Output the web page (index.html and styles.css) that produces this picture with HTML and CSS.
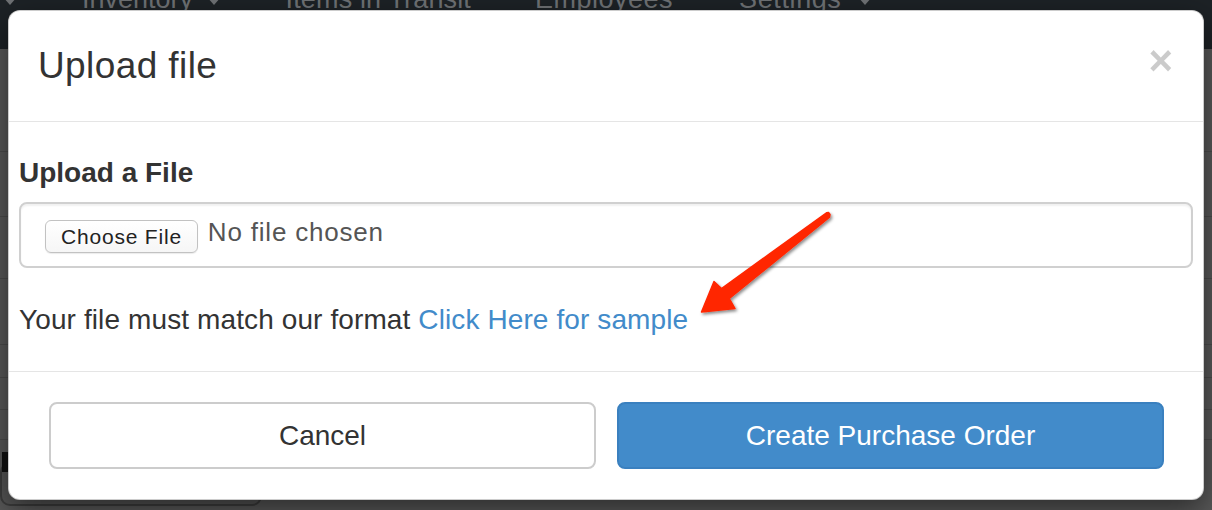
FILE: index.html
```html
<!DOCTYPE html>
<html lang="en">
<head>
<meta charset="utf-8">
<title>Upload file</title>
<link rel="stylesheet" href="styles.css">
</head>
<body>
<div class="page">
  <nav class="navbar">
    <ul class="nav">
      <li class="nav-item nav-caret-only"><span class="caret"></span></li>
      <li class="nav-item">Inventory <span class="caret"></span></li>
      <li class="nav-item">Items in Transit</li>
      <li class="nav-item">Employees</li>
      <li class="nav-item">Settings <span class="caret"></span></li>
    </ul>
  </nav>
  <div class="rows">
    <div class="row r1"></div>
    <div class="row r2"></div>
    <div class="row r3"></div>
    <div class="row r4"></div>
    <div class="row r5"></div>
    <div class="row r6"></div>
    <div class="row r7"></div>
    <div class="bottom-box"><span class="bottom-mark"></span></div>
  </div>
</div>

<div class="modal">
  <div class="modal-header">
    <h4 class="modal-title">Upload file</h4>
    <button class="close" type="button">×</button>
  </div>
  <div class="modal-body">
    <label class="field-label">Upload a File</label>
    <div class="file-control">
      <span class="file-btn">Choose File</span>
      <span class="file-name">No file chosen</span>
    </div>
    <p class="help">Your file must match our format <a class="link" href="#">Click Here for sample</a></p>
  </div>
  <div class="modal-footer">
    <button class="btn btn-default" type="button">Cancel</button>
    <button class="btn btn-primary" type="button">Create Purchase Order</button>
  </div>
</div>

<svg class="annotation" viewBox="0 0 1212 510" width="1212" height="510" aria-hidden="true">
  <defs>
    <filter id="shadow" x="-20%" y="-20%" width="140%" height="140%">
      <feDropShadow dx="1.5" dy="2" stdDeviation="1.5" flood-color="#000" flood-opacity="0.45"/>
    </filter>
  </defs>
  <polygon filter="url(#shadow)" fill="#ff2600" stroke="#ff2600" stroke-width="1.5" stroke-linejoin="round"
    points="826.5,212.8 721.5,288.5 714,281.5 701.5,312 735,308.5 729.3,298.5 829.5,217.2 830,214.5 828.5,212.5"/>
</svg>
</body>
</html>
```

FILE: styles.css
```css
* { box-sizing: border-box; }

html, body {
  margin: 0;
  padding: 0;
}

body {
  width: 1212px;
  height: 510px;
  overflow: hidden;
  background: #585858;
  font-family: "Liberation Sans", Arial, Helvetica, sans-serif;
  color: #333;
  position: relative;
}

/* ---------- background page ---------- */
.page {
  width: 100%;
  height: 100%;
}

.navbar {
  height: 49px;
  background: #1d2226;
  overflow: hidden;
}

.nav {
  list-style: none;
  margin: -15px 0 0 0;
  padding: 0;
  display: flex;
  font-size: 27px;
  line-height: 28px;
  color: #6f7275;
}

.nav-item {
  white-space: nowrap;
}

.nav-caret-only { margin-left: 3px; margin-right: 65px; }
.nav-item:nth-child(2) { margin-right: 65px; }
.nav-item:nth-child(3) { margin-right: 64px; letter-spacing: 0.15px; }
.nav-item:nth-child(4) { margin-right: 66px; letter-spacing: 0.5px; }
.nav-item:nth-child(5) { letter-spacing: 0.6px; }

.caret {
  display: inline-block;
  width: 0;
  height: 0;
  border-top: 8px solid #6f7275;
  border-left: 7px solid transparent;
  border-right: 7px solid transparent;
  vertical-align: middle;
  margin-left: 6px;
}

.nav-item:nth-child(5) .caret { margin-left: 8px; }
.nav-caret-only .caret { margin-left: 0; }

.rows { display: flex; flex-direction: column; }
.row { border-bottom: 1px solid #4b4b4b; }
.r1 { height: 103px; }
.r2 { height: 65px; }
.r3 { height: 62px; }
.r4 { height: 66px; }
.r5 { height: 33px; }
.r6 { height: 32px; }
.r7 { height: 30px; }

.bottom-box {
  margin-top: 22px;
  width: 262px;
  height: 44px;
  border: 2px solid #3d3d3d;
  border-radius: 10px;
  background: #555;
}

.bottom-mark {
  display: block;
  width: 6px;
  height: 20px;
  margin: -12px 0 0 0;
  background: #111;
}

/* ---------- modal ---------- */
.modal {
  position: absolute;
  top: 10px;
  left: 8px;
  width: 1196px;
  height: 490px;
  background: #fff;
  border: 1px solid rgba(0, 0, 0, 0.2);
  border-radius: 12px;
  box-shadow: 0 10px 30px rgba(0, 0, 0, 0.5);
  display: flex;
  flex-direction: column;
  overflow: hidden;
}

.modal-header {
  padding: 29px 30px 30px 29px;
  border-bottom: 1px solid #e5e5e5;
  display: flex;
  justify-content: space-between;
  align-items: flex-start;
}

.modal-title {
  margin: 0;
  font-size: 37px;
  letter-spacing: 0.4px;
  line-height: 51px;
  font-weight: normal;
  color: #333;
}

.close {
  margin: 0;
  padding: 0;
  border: 0;
  background: transparent;
  font-family: "Liberation Sans", Arial, sans-serif;
  font-size: 42px;
  font-weight: bold;
  line-height: 42px;
  color: #000;
  opacity: 0.2;
}

.modal-body {
  padding: 31px 10px 31px 10px;
  display: flex;
  flex-direction: column;
}

.field-label {
  display: block;
  font-size: 28px;
  line-height: 40px;
  font-weight: bold;
  color: #333;
  margin-bottom: 9px;
}

.file-control {
  height: 66px;
  border: 2px solid #d0d0d0;
  border-radius: 8px;
  box-shadow: inset 0 2px 2px rgba(0, 0, 0, 0.06);
  padding: 0 24px;
  display: flex;
  align-items: center;
  gap: 10px;
  margin-bottom: 32px;
}

.file-btn {
  height: 33px;
  padding: 0 15px 0 15px;
  border: 1px solid #c2c2c2;
  border-radius: 6px;
  background: linear-gradient(#ffffff, #f6f6f6);
  box-shadow: 0 1px 1px rgba(0, 0, 0, 0.08);
  font-size: 21px;
  letter-spacing: 0.8px;
  line-height: 31px;
  color: #222;
  display: flex;
  align-items: center;
  margin-top: 2px;
}

.file-name {
  font-size: 26px;
  letter-spacing: 0.8px;
  line-height: 40px;
  color: #555;
  margin-top: -6px;
}

.help {
  margin: 0;
  font-size: 28px;
  letter-spacing: 0.11px;
  line-height: 40px;
  color: #333;
}

.link {
  color: #428bca;
  text-decoration: none;
}

.modal-footer {
  border-top: 1px solid #e5e5e5;
  padding: 30px 39px 30px 40px;
  display: grid;
  grid-template-columns: 1fr 1fr;
  gap: 21px;
}

.btn {
  height: 67px;
  margin: 0;
  font-family: "Liberation Sans", Arial, sans-serif;
  font-size: 28px;
  line-height: 40px;
  border-radius: 8px;
  cursor: pointer;
}

.btn-default {
  background: #fff;
  border: 2px solid #cccccc;
  color: #333;
}

.btn-primary {
  background: #428bca;
  border: 2px solid #3a80bf;
  color: #fff;
}

/* ---------- annotation arrow ---------- */
.annotation {
  position: absolute;
  top: 0;
  left: 0;
  pointer-events: none;
}
```
